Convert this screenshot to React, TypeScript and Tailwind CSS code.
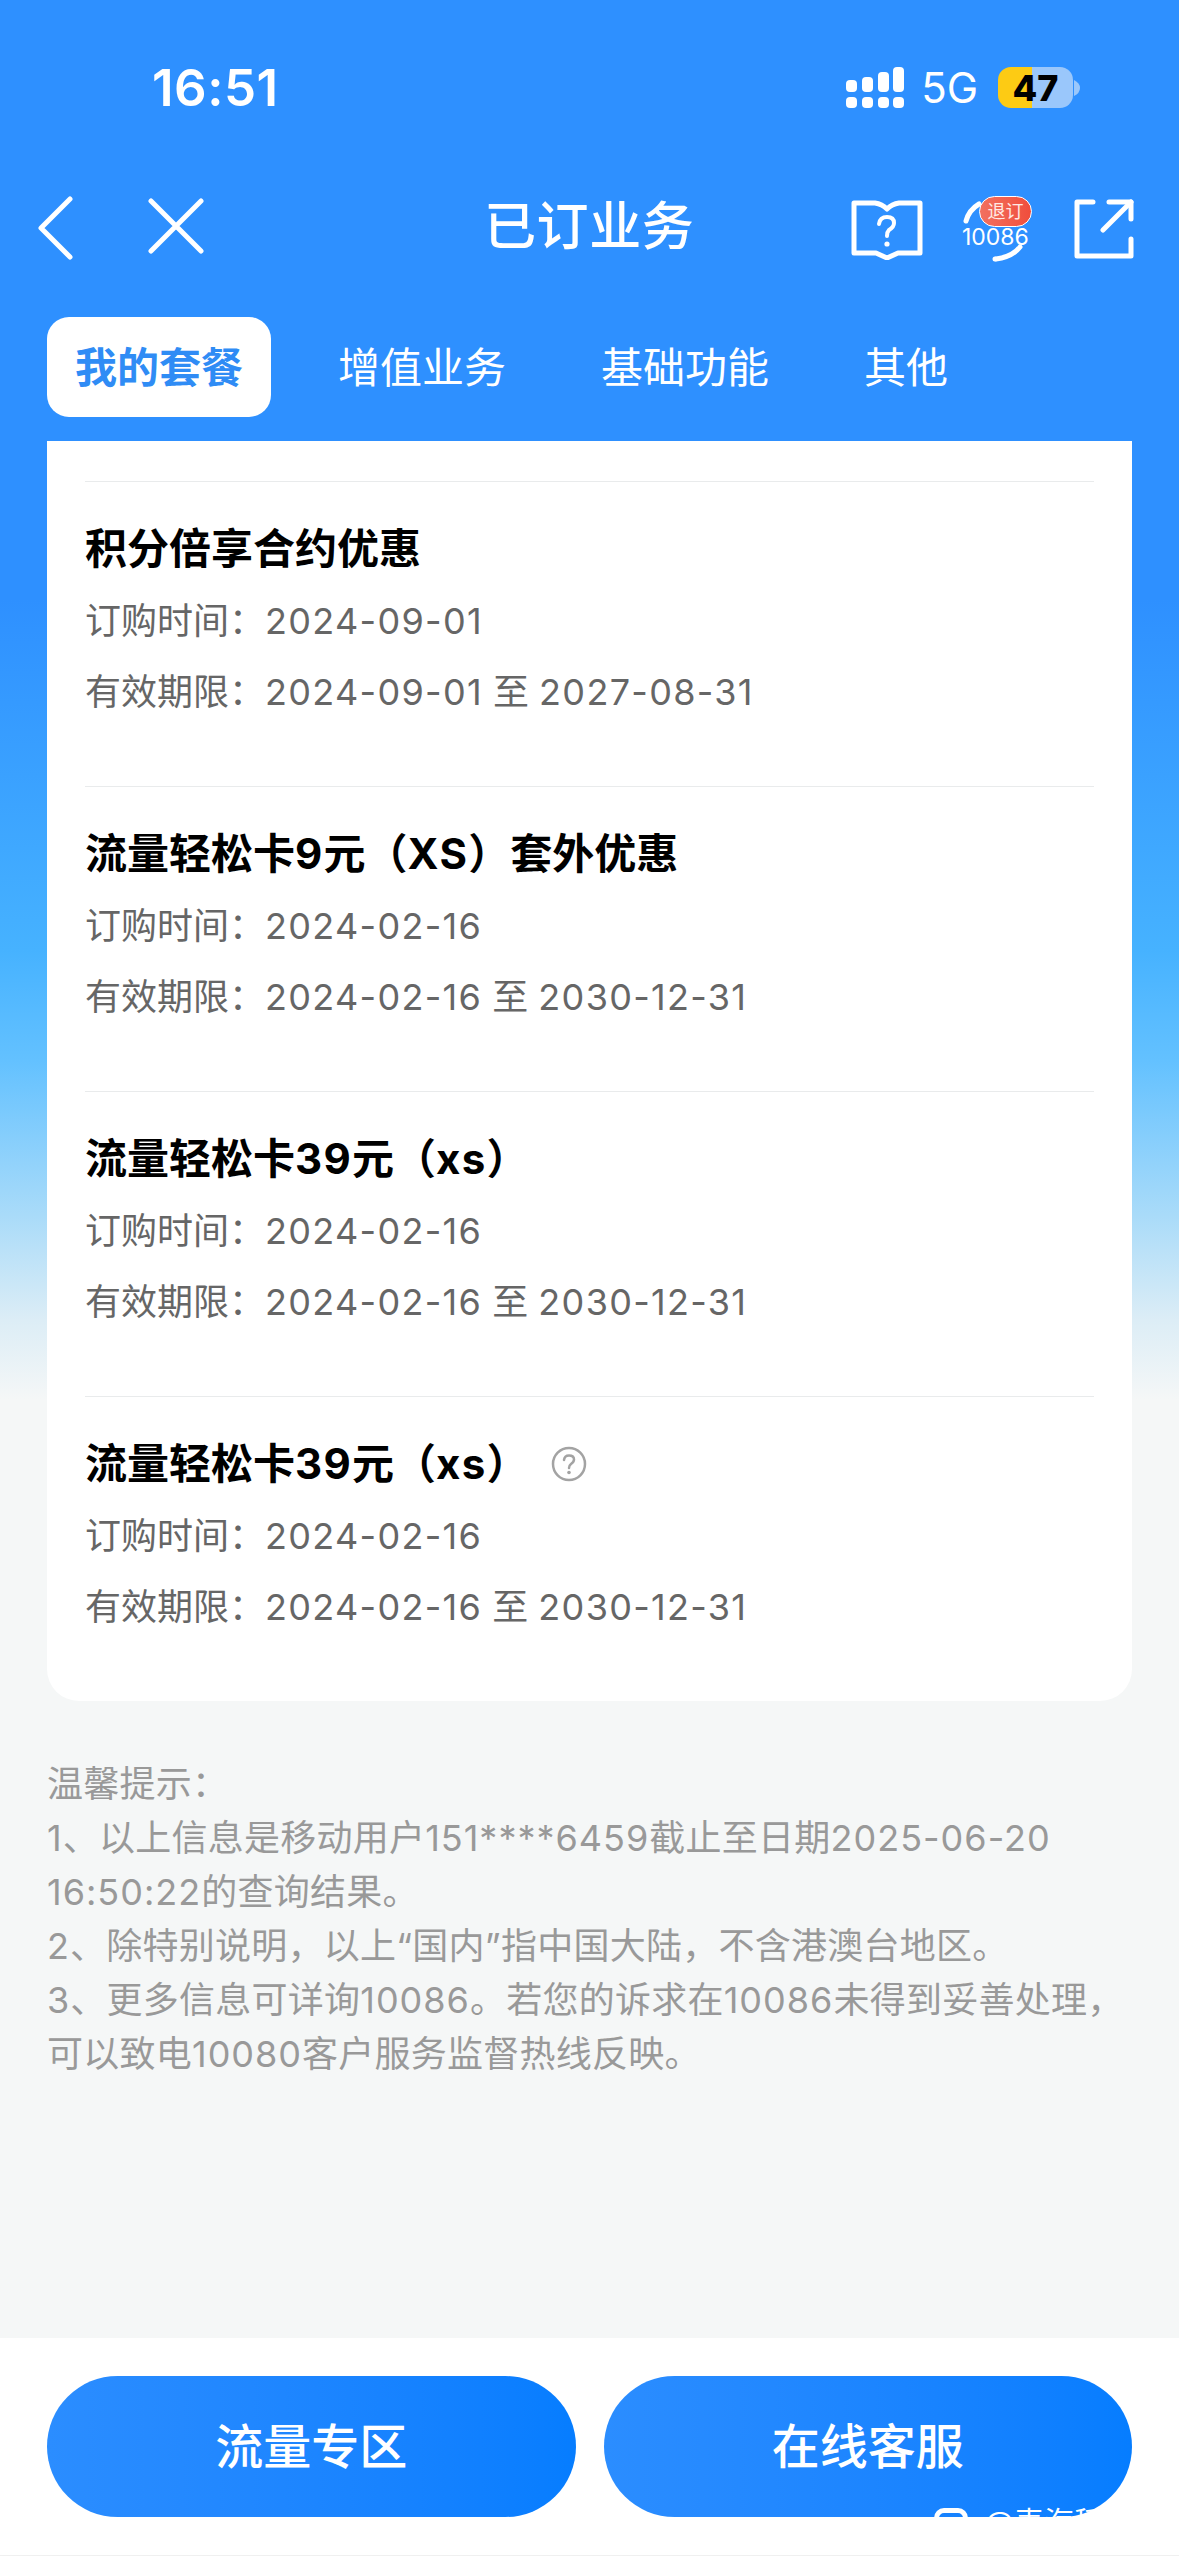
const cjk = "font-['Inter','Noto_Sans_CJK_SC',sans-serif]";

const plans = [
  { name: '积分倍享合约优惠', ordered: '2024-09-01', end: '2027-08-31' },
  { name: '流量轻松卡9元（XS）套外优惠', ordered: '2024-02-16', end: '2030-12-31' },
  { name: '流量轻松卡39元（xs）', ordered: '2024-02-16', end: '2030-12-31' },
  { name: '流量轻松卡39元（xs）', ordered: '2024-02-16', end: '2030-12-31', help: true },
];

const tabs = ['增值业务', '基础功能', '其他'];

const hints = [
  '温馨提示：',
  '1、以上信息是移动用户151****6459截止至日期2025-06-20',
  '16:50:22的查询结果。',
  '2、除特别说明，以上“国内”指中国大陆，不含港澳台地区。',
  '3、更多信息可详询10086。若您的诉求在10086未得到妥善处理，',
  '可以致电10080客户服务监督热线反映。',
];

// 数字和拉丁字母比系统字体窄一点，单独加字距
function Spaced({ text, spacing }: { text: string; spacing: string }) {
  return (
    <>
      {text.split(/([\dA-Za-z:*-]+)/).map((part, i) =>
        i % 2 === 1 ? (
          <span key={i} className={spacing}>
            {part}
          </span>
        ) : (
          part
        ),
      )}
    </>
  );
}

function SignalIcon() {
  return (
    <svg width="58" height="41" viewBox="0 0 58 41" fill="white">
      <rect x="0" y="13" width="11" height="12" rx="4" />
      <rect x="16" y="10" width="11" height="15" rx="4" />
      <rect x="32" y="5" width="11" height="20" rx="4" />
      <rect x="47" y="0" width="11" height="25" rx="4" />
      <rect x="0" y="30" width="11" height="11" rx="4" />
      <rect x="16" y="30" width="11" height="11" rx="4" />
      <rect x="32" y="30" width="11" height="11" rx="4" />
      <rect x="47" y="30" width="11" height="11" rx="4" />
    </svg>
  );
}

function Battery() {
  return (
    <div className="flex items-center">
      <div className="relative flex h-[41px] w-[75px] overflow-hidden rounded-[13px]">
        <div className="w-[34px] bg-[#fdcb14]" />
        <div className="flex-1 bg-[#9ac7fb]" />
        <span className="absolute inset-0 flex items-center justify-center text-[36px] font-extrabold text-black">47</span>
      </div>
      <svg width="7" height="16" viewBox="0 0 7 16" className="ml-[1px]">
        <path d="M0 0 Q6 3 6 8 Q6 13 0 16 Z" fill="#9ac7fb" />
      </svg>
    </div>
  );
}

function BookIcon() {
  return (
    <svg width="72" height="60" viewBox="0 0 72 60" fill="none" stroke="white" strokeWidth="5" strokeLinejoin="round" strokeLinecap="round">
      <path d="M3 3 H24 Q31 4 36 9 Q41 4 48 3 H69 V53 H47 L36 58 L25 53 H3 Z" />
      <path d="M28 24 Q29 17 36 17 Q43 17 43 23 Q43 27 38 30 Q36 32 36 36" strokeWidth="4" />
      <circle cx="36" cy="44" r="2.600" fill="white" stroke="none" />
    </svg>
  );
}

function HotlineIcon() {
  return (
    <div className="relative h-[68px] w-[70px]">
      <svg width="70" height="68" viewBox="0 0 70 68" fill="none" stroke="white" strokeWidth="5" strokeLinecap="round" className="absolute inset-0">
        <path d="M4 25 Q7 14 17 8" />
        <path d="M58 51 Q50 61 34 63" />
        <circle cx="33" cy="63" r="2.500" fill="white" stroke="none" />
      </svg>
      <span className="absolute left-0 top-[29px] text-[23px] leading-[24px] text-white">10086</span>
      <span className="absolute left-[17px] top-0 flex h-[31px] w-[53px] items-center justify-center rounded-full border border-white bg-gradient-to-r from-[#f2705f] to-[#f04d3c] text-[18px] leading-none text-[#ffe9e4]">
        退订
      </span>
    </div>
  );
}

function ShareIcon() {
  return (
    <svg width="60" height="62" viewBox="0 0 60 62" fill="none" stroke="white" strokeWidth="5" strokeLinecap="round" strokeLinejoin="round">
      <path d="M19 3 H3 V57 H57 V40" />
      <path d="M29 31 L57 3" />
      <path d="M35 3 H57 V20" />
    </svg>
  );
}

function PlanItem({ name, ordered, end, help }: { name: string; ordered: string; end: string; help?: boolean }) {
  return (
    <div className="border-t border-[#e9ebec] pt-[37px] pb-[58px]">
      <div className="flex h-[60px] items-center">
        <h3 className="text-[42px] leading-[60px] font-bold text-black">
          <Spaced text={name} spacing="tracking-[1.3px]" />
        </h3>
        {help && (
          <svg width="36" height="36" viewBox="0 0 36 36" fill="none" className="ml-[22px]">
            <circle cx="18" cy="18" r="16" stroke="#a3a3a3" strokeWidth="2.500" />
            <path d="M13 14 Q13.500 9.500 18 9.500 Q23 9.500 23 13.500 Q23 16 20 18 Q18 19.500 18 22" stroke="#a3a3a3" strokeWidth="2.500" strokeLinecap="round" />
            <circle cx="18" cy="26.500" r="1.800" fill="#a3a3a3" />
          </svg>
        )}
      </div>
      <p className="mt-[7px] text-[36px] leading-[71px] text-[#666666]">
        订购时间：<span className="tracking-[1.3px]">{ordered}</span>
      </p>
      <p className="text-[36px] leading-[71px] text-[#666666]">
        有效期限：<span className="tracking-[1.3px]">{ordered}</span> 至 <span className="tracking-[1.3px]">{end}</span>
      </p>
    </div>
  );
}

export default function App() {
  return (
    <div
      className={`flex h-[2556px] w-[1179px] flex-col overflow-hidden bg-[linear-gradient(180deg,#2e90ff_0px,#2e90ff_600px,#46b2ff_950px,#63c1ff_1060px,#a9dbf9_1215px,#dcedf6_1320px,#f5f7f7_1400px,#f5f7f7_100%)] ${cjk}`}
    >
      {/* 状态栏 */}
      <div className="flex h-[176px] items-start justify-between pl-[152px] pr-[98px] pt-[58px] text-white">
        <span className="text-[51px] leading-[60px] font-semibold tracking-[0.5px]">16:51</span>
        <div className="flex items-center pt-[9px]">
          <SignalIcon />
          <span className="ml-[17px] mr-[20px] text-[42px] leading-[41px]">5G</span>
          <Battery />
        </div>
      </div>

      {/* 导航 */}
      <div className="relative flex h-[141px] items-start justify-between pl-[37px] pr-[45px] pt-[20px]">
        <div className="flex items-start gap-[75px]">
          <svg width="36" height="64" viewBox="0 0 36 64" fill="none" stroke="white" strokeWidth="5" strokeLinecap="round" strokeLinejoin="round">
            <path d="M33 3 L4 32 L33 61" />
          </svg>
          <svg width="56" height="56" viewBox="0 0 56 56" fill="none" stroke="white" strokeWidth="5" strokeLinecap="round" className="mt-[2px]">
            <path d="M3 3 L53 53 M53 3 L3 53" />
          </svg>
        </div>
        <h1 className="absolute left-[484px] top-[21px] text-[52px] leading-[60px] font-medium tracking-[0.6px] text-white">已订业务</h1>
        <div className="flex items-center">
          <BookIcon />
          <div className="ml-[39px] mr-[42px]">
            <HotlineIcon />
          </div>
          <ShareIcon />
        </div>
      </div>

      {/* 标签 */}
      <div className="ml-[47px] mb-[24px] flex gap-[39px] text-[42px] text-white">
        <div className="flex h-[100px] w-[224px] items-center justify-center rounded-[22px] bg-white font-bold text-[#2f8cf5]">我的套餐</div>
        {tabs.map((tab) => (
          <div key={tab} className="flex h-[100px] items-center px-[28px]">
            {tab}
          </div>
        ))}
      </div>

      {/* 套餐列表 */}
      <div className="mx-[47px] rounded-b-[32px] bg-white px-[38px] pt-[40px]">
        {plans.map((plan, i) => (
          <PlanItem key={i} {...plan} />
        ))}
      </div>

      {/* 提示 */}
      <div className="mx-[47px] mt-[56px] text-[36px] leading-[54px] tracking-[0.25px] text-[#999999]">
        {hints.map((line) => (
          <p key={line}>
            <Spaced text={line} spacing="tracking-[1px]" />
          </p>
        ))}
      </div>

      <div className="flex-1" />

      {/* 底部按钮 */}
      <div className="relative flex h-[218px] gap-[28px] border-b border-[#f0f0f0] bg-white px-[47px] pt-[38px]">
        <button className="h-[141px] flex-1 rounded-full bg-gradient-to-r from-[#2b8dff] to-[#067dff] text-[48px] font-medium text-white">流量专区</button>
        <button className="h-[141px] flex-1 rounded-full bg-gradient-to-r from-[#2b8dff] to-[#067dff] text-[48px] font-medium text-white">在线客服</button>
        {/* 水印 */}
        <div className="absolute left-[934px] top-[167px] flex items-start gap-[17px] text-white">
          <div className="mt-[3px] h-[36px] w-[34px] rounded-[10px] border-[5px] border-white" />
          <span className="text-[30px] leading-[34px]">@麦海稻</span>
        </div>
      </div>
    </div>
  );
}
